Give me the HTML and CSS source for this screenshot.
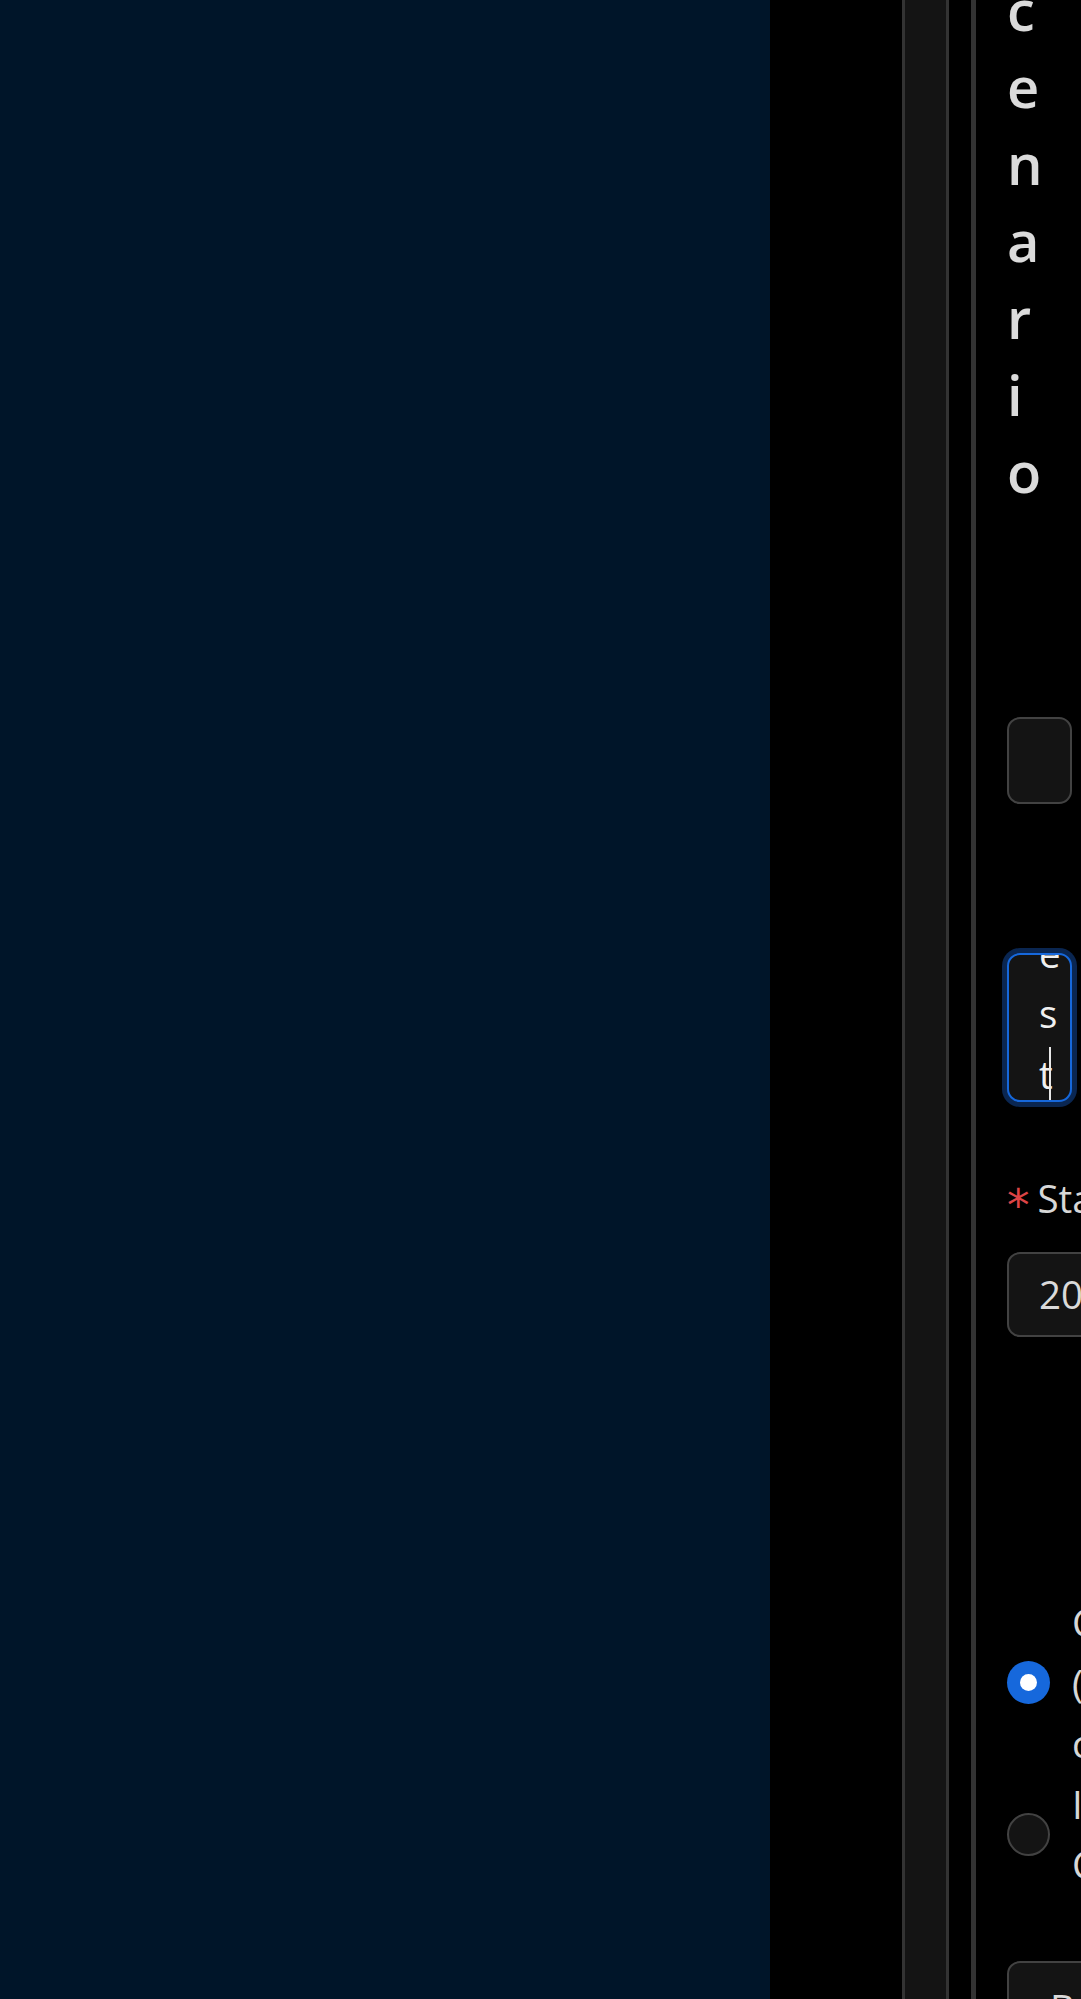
FILE: index.html
```html
<!DOCTYPE html>
<html lang="en">
<head>
<meta charset="utf-8">
<title>Scenario</title>
<link rel="stylesheet" href="styles.css">
</head>
<body>
<div class="app">
  <aside class="sider"></aside>
  <div class="gutter"></div>
  <div class="rail"></div>
  <div class="gap"></div>
  <main class="content">
    <h4 class="title">Scenario</h4>
    <div class="select"></div>
    <div class="textarea">
      <div class="ta-text">Test scenario</div>
      <span class="caret"></span>
    </div>
    <div class="field">
      <div class="label"><span class="req">*</span>Start date</div>
      <div class="input">2024-01-01</div>
    </div>
    <div class="radios">
      <label class="radio">
        <span class="dot on"></span>
        <span class="rtext">Copy (default) config</span>
      </label>
      <label class="radio">
        <span class="dot off"></span>
        <span class="rtext">Import CSV</span>
      </label>
    </div>
    <button class="btn">Back</button>
  </main>
</div>
</body>
</html>
```

FILE: styles.css
```css
html, body {
  margin: 0;
  padding: 0;
  background: #000;
  overflow: hidden;
}
body {
  font-family: "Open Sans", "Noto Sans", sans-serif;
  color: rgba(255, 255, 255, 0.85);
}
.app {
  display: flex;
  height: 1999px;
}
.sider {
  flex: none;
  width: 770px;
  background: #001529;
}
.gutter {
  flex: none;
  width: 132px;
}
.rail {
  flex: none;
  width: 41px;
  background: #141414;
  border-left: 3px solid #333;
  border-right: 3px solid #333;
}
.gap {
  flex: none;
  width: 22px;
}
.content {
  flex: 1;
  min-width: 0;
  border-left: 5px solid #333;
  padding-left: 31px;
}
.title {
  margin: -106px 0 0;
  width: 36px;
  word-break: break-all;
  font-size: 56px;
  line-height: 77px;
  font-weight: 600;
  color: rgba(255, 255, 255, 0.86);
}
.select {
  margin-top: 207px;
  width: 65px;
  height: 87px;
  box-sizing: border-box;
  border: 2px solid #424242;
  border-radius: 13px;
  background: #141414;
}
.textarea {
  position: relative;
  margin-top: 149px;
  width: 65px;
  height: 149px;
  box-sizing: border-box;
  border: 2px solid #1668dc;
  border-radius: 13px;
  background: #141414;
  box-shadow: 0 0 0 5px #0a2651;
  overflow: hidden;
  padding-left: 30px;
  font-size: 38.5px;
  line-height: 60.5px;
  color: #f0f0f0;
}
.ta-text {
  width: 1px;
  margin-top: -93px;
  word-break: break-all;
}
.caret {
  position: absolute;
  left: 40px;
  top: 92px;
  width: 2px;
  height: 60px;
  background: #e8e8e8;
}
.field {
  margin-top: 66px;
}
.label {
  font-size: 38.5px;
  line-height: 60.5px;
  height: 60.5px;
  padding-bottom: 23.5px;
  white-space: nowrap;
}
.req {
  line-height: 0;
  margin-right: 8px;
  color: #dc4446;
  font-family: "DejaVu Sans", sans-serif;
  font-size: 45px;
  vertical-align: -8px;
}
.input {
  width: 420px;
  height: 85px;
  box-sizing: border-box;
  border: 2px solid #424242;
  border-radius: 13px;
  background: #141414;
  padding: 0 30px;
  font-size: 38.5px;
  line-height: 81px;
  white-space: nowrap;
}
.radios {
  margin-top: 255px;
  display: flex;
  flex-direction: column;
}
.radio {
  display: flex;
  align-items: center;
  gap: 22px;
}
.dot {
  flex: none;
  width: 43px;
  height: 43px;
  box-sizing: border-box;
  border-radius: 50%;
}
.dot.on {
  background: #1668dc;
  display: flex;
  align-items: center;
  justify-content: center;
}
.dot.on::after {
  content: "";
  width: 17px;
  height: 17px;
  border-radius: 50%;
  background: #fff;
}
.dot.off {
  border: 2px solid #424242;
  background: #141414;
}
.rtext {
  width: 10px;
  font-size: 38.5px;
  line-height: 60.5px;
}
.btn {
  display: block;
  margin-top: 66px;
  height: 88px;
  box-sizing: border-box;
  border: 2px solid #424242;
  border-radius: 13px;
  background: #141414;
  padding: 7px 41px 0;
  font-family: inherit;
  font-size: 38.5px;
  line-height: 60.5px;
  color: rgba(255, 255, 255, 0.85);
  text-align: left;
  white-space: nowrap;
}
```
